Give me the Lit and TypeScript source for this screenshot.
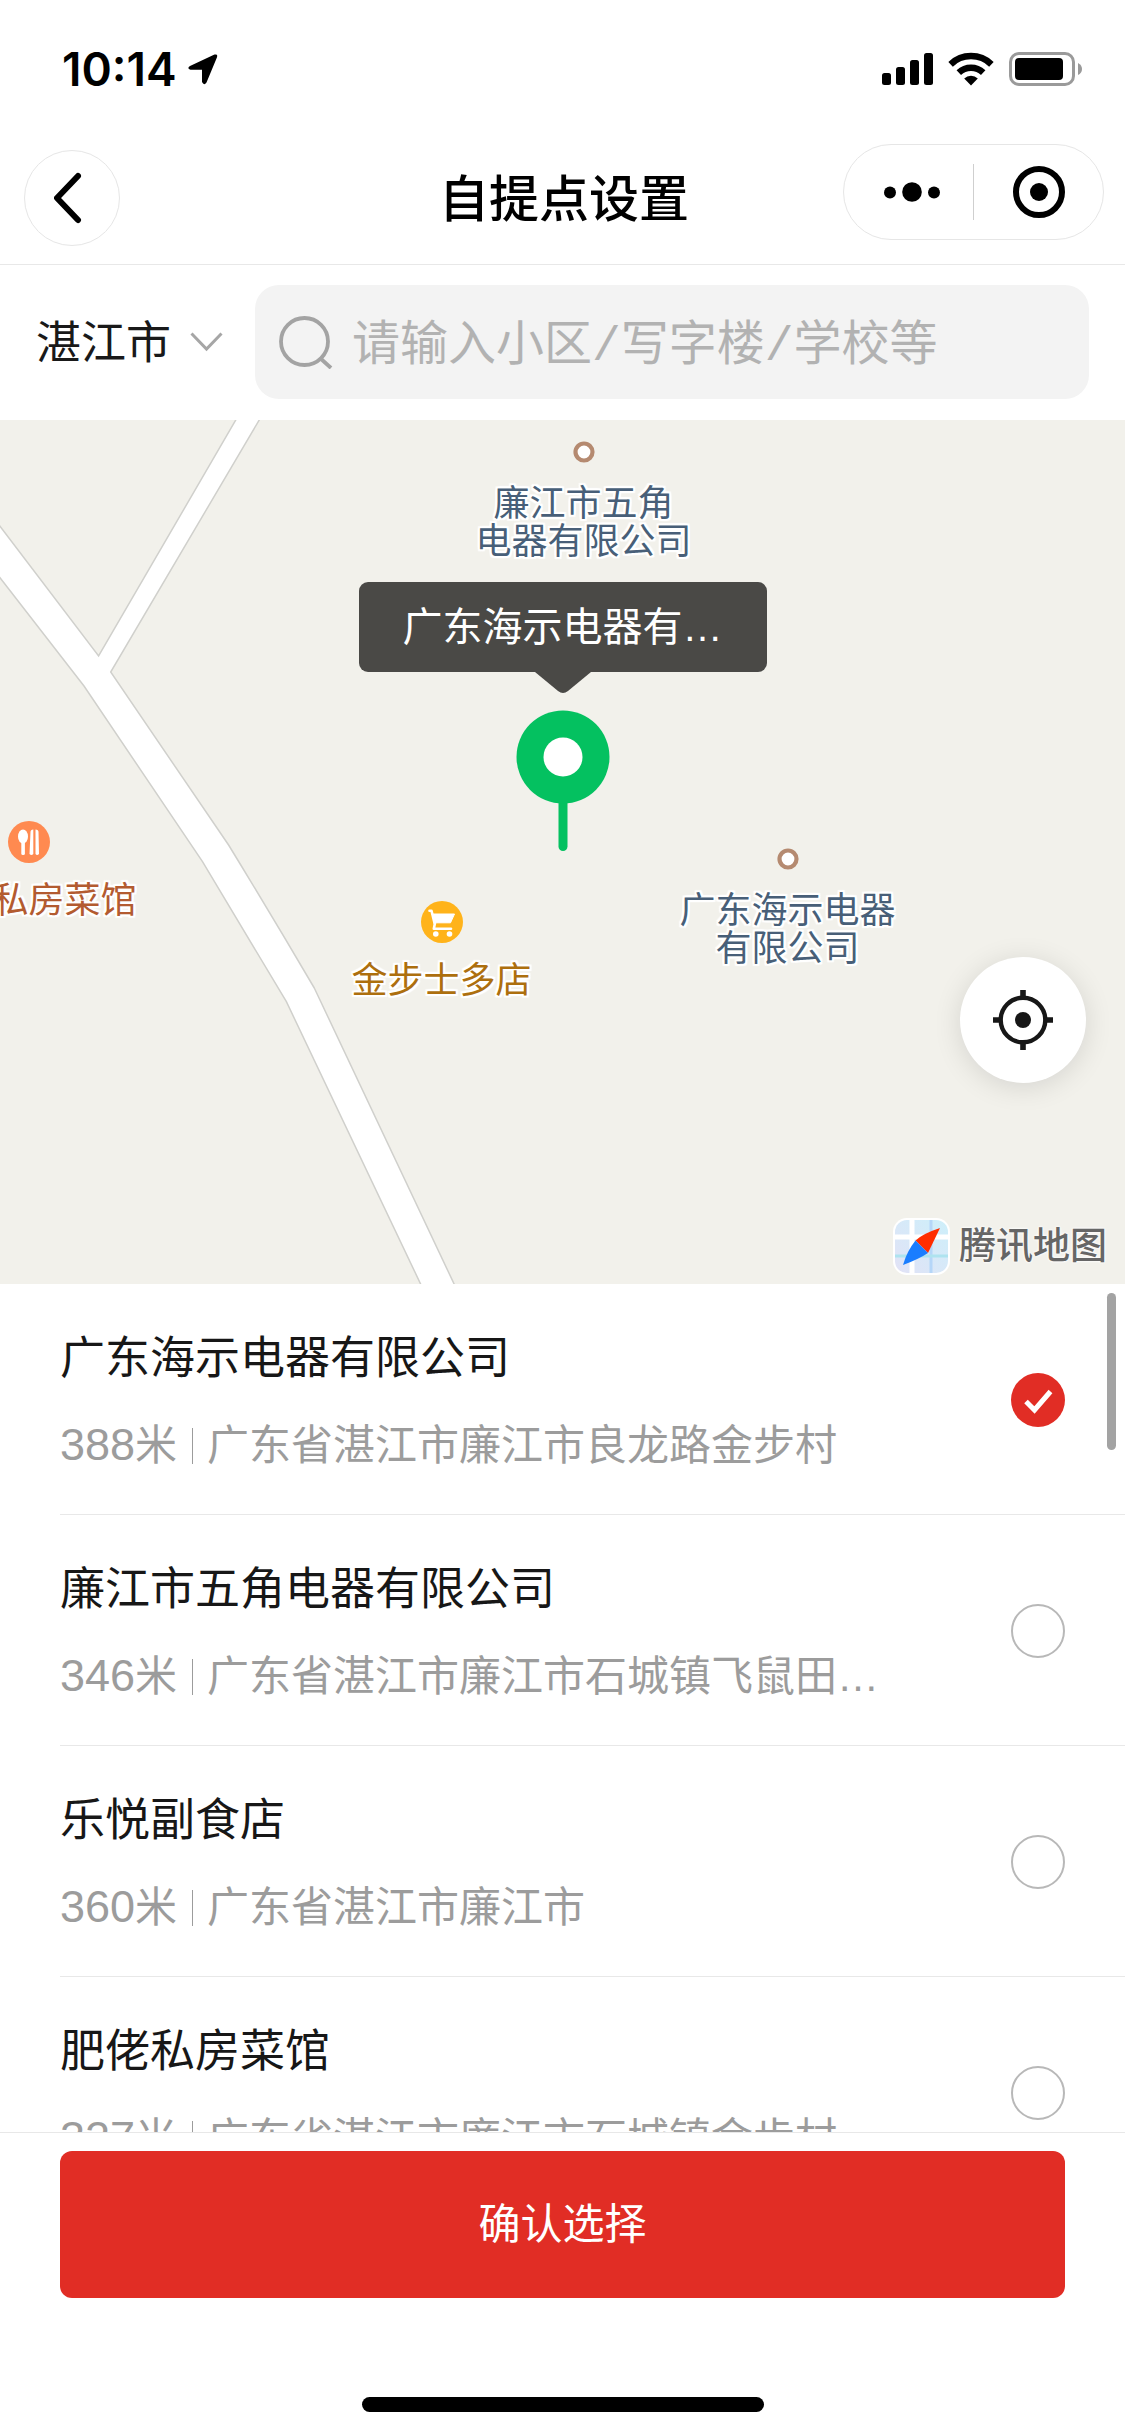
import { LitElement, html, css, svg, nothing } from "lit";
import { customElement, property, state } from "lit/decorators.js";
import { classMap } from "lit/directives/class-map.js";
import { styleMap } from "lit/directives/style-map.js";

interface Place {
  id: string;
  name: string;
  metres: number;
  address: string;
}

interface Poi {
  kind: "company" | "food" | "shop";
  lines: string[];
  /* offset from the horizontal centre of the map, and distance from its top */
  dx: number;
  y: number;
  labelDx?: number;
}

const PLACES: Place[] = [
  { id: "p1", name: "广东海示电器有限公司", metres: 388, address: "广东省湛江市廉江市良龙路金步村" },
  { id: "p2", name: "廉江市五角电器有限公司", metres: 346, address: "广东省湛江市廉江市石城镇飞鼠田…" },
  { id: "p3", name: "乐悦副食店", metres: 360, address: "广东省湛江市廉江市" },
  { id: "p4", name: "肥佬私房菜馆", metres: 327, address: "广东省湛江市廉江市石城镇金步村" },
];

const POIS: Poi[] = [
  { kind: "company", lines: ["廉江市五角", "电器有限公司"], dx: 21, y: 32 },
  { kind: "company", lines: ["广东海示电器", "有限公司"], dx: 225, y: 439 },
  { kind: "food", lines: ["私房菜馆"], dx: -534, y: 422, labelDx: 36 },
  { kind: "shop", lines: ["金步士多店"], dx: -121, y: 502 },
];

@customElement("status-bar")
class StatusBar extends LitElement {
  static styles = css`
    :host {
      display: flex;
      align-items: center;
      justify-content: space-between;
      box-sizing: border-box;
      height: 132px;
      padding: 6px 43px 0 62px;
      color: #000;
    }
    .clock {
      display: flex;
      align-items: center;
      gap: 11px;
      font: 600 46px/54px Inter, "Liberation Sans", sans-serif;
    }
    .signals {
      display: flex;
      align-items: center;
      gap: 15px;
    }
    svg {
      display: block;
    }
  `;

  render() {
    return html`
      <div class="clock">
        <span>10:14</span>
        <svg width="30" height="31" viewBox="0 0 30 31" aria-hidden="true">
          <path d="M2 12 L26.500 0.600 Q30 -0.300 29 3.200 L18.500 28.500 Q16 32 14 28 L14 15.800 L2.500 15.800 Q-1.500 14.500 2 12 Z" />
        </svg>
      </div>
      <div class="signals">
        <svg width="51" height="34" viewBox="0 0 51 34" aria-hidden="true">
          <rect x="0" y="21" width="9" height="12" rx="2.500" />
          <rect x="14" y="15" width="9" height="18" rx="2.500" />
          <rect x="28" y="8" width="9" height="25" rx="2.500" />
          <rect x="42" y="1" width="9" height="32" rx="2.500" />
        </svg>
        <svg width="46" height="34" viewBox="0 0 46 34" aria-hidden="true">
          <g fill="none" stroke="#000" stroke-width="6.500">
            <path d="M2.600 12.300 A29.500 29.500 0 0 1 43.400 12.300" />
            <path d="M10.800 20.600 A17.800 17.800 0 0 1 35.200 20.600" />
          </g>
          <path d="M16.200 26.600 A9.800 9.800 0 0 1 29.800 26.600 L23 33.500 Z" />
        </svg>
        <svg width="73" height="34" viewBox="0 0 73 34" aria-hidden="true">
          <rect x="1.500" y="1.500" width="63" height="31" rx="8.500" fill="none" stroke="#9a9a9a" stroke-width="3" />
          <rect x="6" y="6" width="48" height="22" rx="4" />
          <path d="M69 11 Q73 13 73 17 Q73 21 69 23 Z" fill="#9a9a9a" />
        </svg>
      </div>
    `;
  }
}

@customElement("nav-bar")
class NavBar extends LitElement {
  @property() heading = "";

  static styles = css`
    :host {
      display: grid;
      grid-template-columns: 1fr auto 1fr;
      align-items: center;
      height: 132px;
      padding: 0 21px 0 24px;
      border-bottom: 1px solid #e8e8e8;
    }
    h1 {
      margin: 0;
      padding-top: 4px;
      font-size: 50px;
      font-weight: 500;
      line-height: 60px;
      color: #000;
    }
    button {
      display: grid;
      place-items: center;
      margin: 0;
      padding: 0;
      border: 0;
      background: none;
    }
    .back {
      box-sizing: border-box;
      width: 96px;
      height: 96px;
      border: 1px solid #e6e6e6;
      border-radius: 50%;
    }
    .capsule {
      display: flex;
      align-items: center;
      justify-self: end;
      align-self: start;
      box-sizing: border-box;
      width: 261px;
      height: 96px;
      margin-top: 12px;
      border: 1px solid #e6e6e6;
      border-radius: 48px;
    }
    .capsule button {
      flex: 1;
      height: 100%;
    }
    .rule {
      width: 1px;
      height: 56px;
      background: #cfcfcf;
    }
    svg {
      display: block;
    }
  `;

  render() {
    return html`
      <button class="back" aria-label="返回">
        <svg width="36" height="52" viewBox="0 0 36 52" aria-hidden="true">
          <path d="M24 4 L3 26 L24 48" fill="none" stroke="#000" stroke-width="6" stroke-linecap="round" stroke-linejoin="round" />
        </svg>
      </button>
      <h1>${this.heading}</h1>
      <div class="capsule">
        <button aria-label="更多">
          <svg width="64" height="20" viewBox="0 0 64 20" aria-hidden="true">
            <circle cx="13" cy="10.500" r="6" />
            <circle cx="35" cy="10" r="9.800" />
            <circle cx="57" cy="10.500" r="6" />
          </svg>
        </button>
        <span class="rule"></span>
        <button aria-label="关闭">
          <svg width="52" height="52" viewBox="0 0 52 52" aria-hidden="true">
            <circle cx="26" cy="26" r="23" fill="none" stroke="#000" stroke-width="6" />
            <circle cx="26" cy="26" r="9" />
          </svg>
        </button>
      </div>
    `;
  }
}

@customElement("search-row")
class SearchRow extends LitElement {
  static styles = css`
    :host {
      display: flex;
      align-items: center;
      gap: 32px;
      padding: 20px 36px 21px;
    }
    .city {
      display: flex;
      align-items: center;
      gap: 18px;
    }
    select {
      appearance: none;
      margin: 0;
      padding: 3px 0 0;
      border: 0;
      background: none;
      font: inherit;
      font-size: 45px;
      line-height: 60px;
      color: #191919;
    }
    .box {
      display: flex;
      flex: 1;
      align-items: center;
      gap: 19px;
      min-width: 0;
      height: 114px;
      padding: 0 24px;
      border-radius: 24px;
      background: #f3f3f3;
    }
    input {
      flex: 1;
      min-width: 0;
      margin: 0;
      padding: 9px 0 0;
      border: 0;
      outline: 0;
      background: none;
      font: 400 48px/66px "Liberation Mono", "Noto Sans CJK SC", sans-serif;
      color: #191919;
    }
    input::placeholder {
      color: #b2b2b2;
      opacity: 1;
    }
    svg {
      display: block;
      flex: none;
    }
  `;

  render() {
    return html`
      <label class="city">
        <select aria-label="城市">
          <option>湛江市</option>
        </select>
        <svg width="33" height="20" viewBox="0 0 33 20" aria-hidden="true">
          <path d="M1.500 1.500 L16.500 17 L31.500 1.500" fill="none" stroke="#a6a6a6" stroke-width="3" />
        </svg>
      </label>
      <label class="box">
        <svg width="54" height="54" viewBox="0 0 54 54" aria-hidden="true">
          <g fill="none" stroke="#a3a3a3" stroke-width="3.800">
            <circle cx="25.500" cy="26.500" r="23.500" />
            <path d="M41 43 L52 53" />
          </g>
        </svg>
        <input type="text" aria-label="搜索" placeholder="请输入小区/写字楼/学校等" />
      </label>
    `;
  }
}

@customElement("pickup-map")
class PickupMap extends LitElement {
  @property() selected = "";

  static styles = css`
    :host {
      display: block;
      position: relative;
      overflow: hidden;
      background: #f2f1eb;
    }
    .roads {
      display: block;
      width: 100%;
      height: 100%;
    }
    .poi {
      position: absolute;
      width: 0;
      height: 0;
      display: flex;
      flex-direction: column;
      align-items: center;
    }
    .mark {
      flex: none;
      display: grid;
      place-items: center;
      width: 42px;
      height: 42px;
      margin-top: -21px;
    }
    .name {
      flex: none;
      margin-top: 12px;
      font-size: 36px;
      line-height: 38px;
      text-align: center;
      white-space: nowrap;
      color: #485f78;
      text-shadow: 2px 0 1px #fff, -2px 0 1px #fff, 0 2px 1px #fff, 0 -2px 1px #fff,
        2px 2px 1px #fff, -2px -2px 1px #fff, 2px -2px 1px #fff, -2px 2px 1px #fff;
    }
    .line {
      display: block;
    }
    .food .name {
      margin-top: 19px;
      color: #b35b30;
    }
    .shop .name {
      margin-top: 19px;
      color: #ad6f0e;
    }
    .pointer {
      position: absolute;
      top: 162px;
      left: 50%;
      display: flex;
      flex-direction: column;
      align-items: center;
      transform: translateX(-50%);
    }
    .tip {
      padding: 0 44px;
      border-radius: 9px;
      background: #4a4946;
      color: #fff;
      font-size: 40px;
      line-height: 90px;
      white-space: nowrap;
    }
    .pin {
      margin-top: 17px;
    }
    .locate {
      position: absolute;
      right: 39px;
      bottom: 201px;
      display: grid;
      place-items: center;
      width: 126px;
      height: 126px;
      padding: 0;
      border: 0;
      border-radius: 50%;
      background: #fff;
      box-shadow: 0 4px 28px rgba(0, 0, 0, 0.12);
    }
    .brand {
      position: absolute;
      right: 18px;
      bottom: 9px;
      display: flex;
      align-items: center;
      gap: 9px;
      font-size: 37px;
      font-weight: 500;
      line-height: 57px;
      color: #666;
      text-shadow: 0 0 3px #fff, 0 0 3px #fff;
    }
    svg {
      display: block;
    }
  `;

  private mark(kind: Poi["kind"]) {
    if (kind === "company") {
      return svg`<circle cx="21" cy="21" r="8.500" fill="#fff" stroke="#b58a70" stroke-width="4.200" />`;
    }
    if (kind === "food") {
      return svg`
        <circle cx="21" cy="21" r="21" fill="#ff8a50" />
        <ellipse cx="15" cy="15.500" rx="5" ry="7" fill="#fff" />
        <rect x="13.300" y="20" width="3.600" height="14" rx="1.500" fill="#fff" />
        <path d="M22.500 11 Q22.500 8.500 25.300 8.500 V33 Q23.500 35 21.500 33 Z" fill="#fff" />
        <path d="M27.500 8.500 Q30.500 8.500 30.500 11 L31 33 Q29 35 27.500 33 Z" fill="#fff" />`;
    }
    return svg`
      <circle cx="21" cy="21" r="21" fill="#ffb31a" />
      <path d="M8.500 9.800 H10.500 L13.500 22" fill="none" stroke="#fff" stroke-width="2.600" stroke-linejoin="round" stroke-linecap="round" />
      <path d="M11 13 H33.500 L29.500 21.800 H14 Z" fill="#fff" stroke="#fff" stroke-width="1" stroke-linejoin="round" />
      <path d="M14 22 L12.800 27.800 H30" fill="none" stroke="#fff" stroke-width="2.600" stroke-linejoin="round" stroke-linecap="round" />
      <circle cx="14.800" cy="33" r="2.800" fill="#fff" />
      <circle cx="28.500" cy="33" r="2.800" fill="#fff" />`;
  }

  private poi(p: Poi) {
    return html`
      <div
        class=${classMap({ poi: true, [p.kind]: true })}
        style=${styleMap({ left: `calc(50% + ${p.dx}px)`, top: `${p.y}px` })}
      >
        <svg class="mark" width="42" height="42" viewBox="0 0 42 42" aria-hidden="true">${this.mark(p.kind)}</svg>
        <div class="name" style=${p.labelDx ? styleMap({ marginLeft: `${p.labelDx * 2}px` }) : nothing}>
          ${p.lines.map((l) => html`<span class="line">${l}</span>`)}
        </div>
      </div>
    `;
  }

  render() {
    return html`
      <svg class="roads" viewBox="0 0 1125 864" preserveAspectRatio="xMidYMin slice" aria-hidden="true">
        <path
          d="M-4 101 L98.600 236 L237.500 -3 H261 L110.700 252 L228.600 425 Q272 496 314.300 568 L456 868 H422.500 L286.400 581.700 L202.500 441.700 L84 266 L-4 152.500 Z"
          fill="#fff"
          stroke="#d0d0cc"
          stroke-width="1.500"
        />
      </svg>
      ${POIS.map((p) => this.poi(p))}
      <div class="pointer">
        <div class="tip">${this.selected}</div>
        <svg width="56" height="21" viewBox="0 0 56 21" aria-hidden="true">
          <path d="M0 0 H56 L33 19 Q28 23 23 19 Z" fill="#4a4946" />
        </svg>
        <svg class="pin" width="94" height="142" viewBox="0 0 94 142" aria-hidden="true">
          <rect x="42.500" y="80" width="9" height="61" rx="4.500" fill="#04c160" />
          <circle cx="47" cy="47" r="46.500" fill="#04c160" />
          <circle cx="47" cy="47" r="19.500" fill="#fff" />
        </svg>
      </div>
      <button class="locate" aria-label="定位">
        <svg width="60" height="60" viewBox="0 0 60 60" aria-hidden="true">
          <circle cx="30" cy="30" r="22.300" fill="none" stroke="#171717" stroke-width="4.400" />
          <path d="M30 0 V7 M30 53 V60 M0 30 H7 M53 30 H60" stroke="#171717" stroke-width="5.600" />
          <circle cx="30" cy="30" r="8" fill="#171717" />
        </svg>
      </button>
      <div class="brand">
        <svg width="57" height="57" viewBox="0 0 57 57" aria-hidden="true">
          <defs>
            <linearGradient id="tile" x1="0" y1="1" x2="1" y2="0">
              <stop offset="0" stop-color="#e2e2f6" />
              <stop offset="1" stop-color="#cdeffa" />
            </linearGradient>
          </defs>
          <rect width="57" height="57" rx="14" fill="#fff" />
          <rect x="2" y="2" width="53" height="53" rx="12" fill="url(#tile)" />
          <path d="M38 2 V55" stroke="#b5d6f8" stroke-width="3" />
          <path d="M2 38 H55" stroke="#aee3ef" stroke-width="3" />
          <path d="M19 2 V55 M2 19 H55" stroke="#fff" stroke-width="5" />
          <path d="M47 10 L35 35 L22.500 22.500 Q30 15.500 47 10 Z" fill="#ff2d00" />
          <path d="M10 47 Q14 33 22.500 22.500 L35 35 Q26 41 10 47 Z" fill="#1a7dff" />
        </svg>
        <span>腾讯地图</span>
      </div>
    `;
  }
}

@customElement("place-list")
class PlaceList extends LitElement {
  @property({ attribute: false }) places: Place[] = [];
  @state() private chosen = "p1";

  static styles = css`
    :host {
      display: block;
      position: relative;
      overflow: hidden;
    }
    .scroller {
      height: 100%;
      overflow-y: auto;
      scrollbar-width: none;
    }
    .row {
      display: flex;
      align-items: center;
      gap: 60px;
      height: 228px;
      margin-left: 60px;
      padding: 2px 60px 0 0;
      border-bottom: 1px solid #e8e8e8;
    }
    .text {
      flex: 1;
      min-width: 0;
      display: grid;
      gap: 27px;
      padding-top: 5px;
    }
    .title {
      font-size: 45px;
      line-height: 60px;
      color: #171717;
    }
    .detail {
      display: flex;
      align-items: center;
      font-size: 42px;
      line-height: 60px;
      color: #9c9c9c;
      white-space: nowrap;
    }
    .metres {
      font-size: 45px;
      line-height: 58px;
    }
    .bar {
      width: 1px;
      height: 36px;
      margin: 0 14px 0 15px;
      background: #9c9c9c;
    }
    .pick {
      display: grid;
      flex: none;
    }
    .pick > * {
      grid-area: 1 / 1;
    }
    input {
      appearance: none;
      box-sizing: border-box;
      width: 54px;
      height: 54px;
      margin: 0;
      border: 2px solid #b8b8b8;
      border-radius: 50%;
    }
    input:checked {
      border: 0;
      background: #e12d25;
    }
    .tick {
      display: none;
      pointer-events: none;
    }
    input:checked + .tick {
      display: block;
    }
    .thumb {
      position: absolute;
      top: 9px;
      right: 9px;
      width: 9px;
      height: 157px;
      border-radius: 5px;
      background: #a3a3a3;
    }
  `;

  private row(p: Place) {
    return html`
      <label class="row" for=${p.id}>
        <span class="text">
          <span class="title">${p.name}</span>
          <span class="detail">
            <span><span class="metres">${p.metres}</span>米</span>
            <span class="bar"></span>
            <span>${p.address}</span>
          </span>
        </span>
        <span class="pick">
          <input
            type="radio"
            name="place"
            id=${p.id}
            .checked=${this.chosen === p.id}
            @change=${() => (this.chosen = p.id)}
          />
          <svg class="tick" width="54" height="54" viewBox="0 0 54 54" aria-hidden="true">
            <path d="M15 28.500 L23.500 37 L39.500 18.500" fill="none" stroke="#fff" stroke-width="5" />
          </svg>
        </span>
      </label>
    `;
  }

  render() {
    return html`
      <div class="scroller">${this.places.map((p) => this.row(p))}</div>
      <div class="thumb"></div>
    `;
  }
}

@customElement("app-root")
class AppRoot extends LitElement {
  static styles = css`
    :host {
      display: flex;
      flex-direction: column;
      height: 100vh;
      background: #fff;
      font-family: "Liberation Sans", "Noto Sans CJK SC", sans-serif;
    }
    pickup-map {
      flex: 864 1 0;
      min-height: 0;
    }
    place-list {
      flex: 848 1 0;
      min-height: 0;
    }
    .footer {
      display: flex;
      flex-direction: column;
      align-items: center;
      padding: 18px 60px 24px;
      border-top: 1px solid #e8e8e8;
    }
    .confirm {
      align-self: stretch;
      height: 147px;
      margin: 0 0 99px;
      padding: 0;
      border: 0;
      border-radius: 12px;
      background: #e12d25;
      color: #fff;
      font: inherit;
      font-size: 42px;
      line-height: 60px;
    }
    .home {
      width: 402px;
      height: 15px;
      border-radius: 8px;
      background: #000;
    }
  `;

  render() {
    return html`
      <status-bar></status-bar>
      <nav-bar heading="自提点设置"></nav-bar>
      <search-row></search-row>
      <pickup-map selected="广东海示电器有…"></pickup-map>
      <place-list .places=${PLACES}></place-list>
      <div class="footer">
        <button class="confirm">确认选择</button>
        <div class="home"></div>
      </div>
    `;
  }
}
